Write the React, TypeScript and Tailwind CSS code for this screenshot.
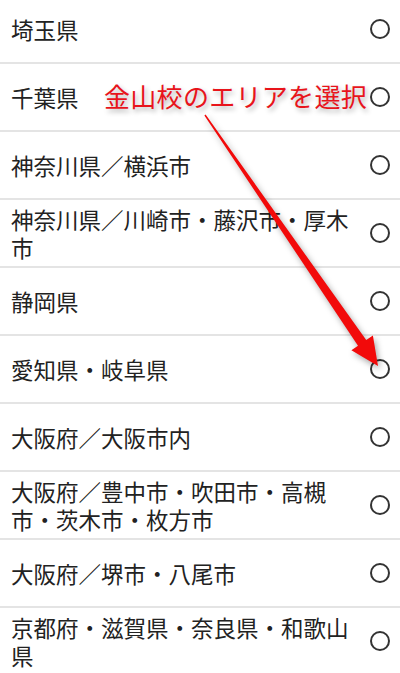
const areas = [
  '埼玉県',
  '千葉県',
  '神奈川県／横浜市',
  '神奈川県／川崎市・藤沢市・厚木市',
  '静岡県',
  '愛知県・岐阜県',
  '大阪府／大阪市内',
  '大阪府／豊中市・吹田市・高槻市・茨木市・枚方市',
  '大阪府／堺市・八尾市',
  '京都府・滋賀県・奈良県・和歌山県',
]

function Radio() {
  return <span className="h-5 w-5 shrink-0 rounded-full border-2 border-[#333333]" />
}

export default function App() {
  return (
    <div lang="ja" className="relative h-[673px] w-[400px] overflow-hidden bg-white font-['Noto_Sans_CJK_JP',sans-serif]">
      {/* list */}
      <div className="-mt-1">
        {areas.map((a) => (
          <div key={a} className="flex h-[68px] items-center gap-4 border-b-2 border-[#e4e4e4] pl-[11px] pr-[10px]">
            <span className="flex-1 text-[22.5px] leading-[28.5px] text-[#222222]">{a}</span>
            <Radio />
          </div>
        ))}
      </div>

      {/* annotation */}
      <p className="pointer-events-none absolute left-[104px] top-[83px] text-[26px] font-normal leading-[26px] tracking-[0.3px] text-[#e8141b] [text-shadow:2px_3px_5px_rgba(0,0,0,0.3)]">
        金山校のエリアを選択
      </p>
      <svg className="pointer-events-none absolute left-0 top-0 drop-shadow-[2px_3px_3px_rgba(0,0,0,0.35)]" width="400" height="673" viewBox="0 0 400 673">
        <polygon
          fill="#f20a0a"
          points="205.6,114.6 366.2,340.1 372.9,335.5 378,366 351.4,350.3 358,345.7 204.4,115.4"
        />
      </svg>
    </div>
  )
}
